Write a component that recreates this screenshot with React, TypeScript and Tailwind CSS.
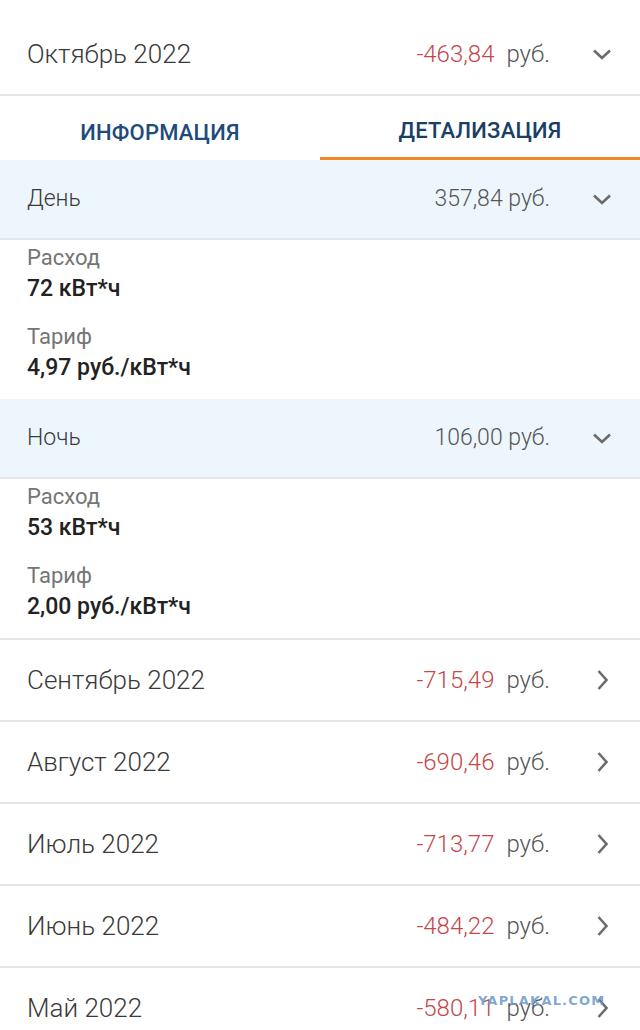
import React from "react";

type Month = { name: string; amount: string; open?: boolean };

const months: Month[] = [
  { name: "Сентябрь 2022", amount: "-715,49" },
  { name: "Август 2022", amount: "-690,46" },
  { name: "Июль 2022", amount: "-713,77" },
  { name: "Июнь 2022", amount: "-484,22" },
  { name: "Май 2022", amount: "-580,11" },
];

function ChevronDown() {
  return (
    <svg width="20" height="12" viewBox="0 0 20 12" className="text-[#6b6b6b]">
      <path d="M2 2.5l8 7.5 8-7.5" fill="none" stroke="currentColor" strokeWidth="2.6" />
    </svg>
  );
}

function ChevronRight() {
  return (
    <svg width="12" height="22" viewBox="0 0 12 22" className="text-[#6b6b6b]">
      <path d="M2.5 2l8 9-8 9" fill="none" stroke="currentColor" strokeWidth="2.6" />
    </svg>
  );
}

function MonthRow({ name, amount, open }: Month) {
  return (
    <div className="flex h-[80px] items-center pl-[27px] pr-[27px]">
      <span className="flex-1 text-[26px] font-light text-[#3a3a3a]">{name}</span>
      <span className="text-[24px] font-light text-[#c4484a]">{amount}</span>
      <span className="ml-[12px] text-[24px] font-light text-[#555]">руб.</span>
      <span className="ml-[41px] flex w-[22px] justify-center">
        {open ? <ChevronDown /> : <ChevronRight />}
      </span>
    </div>
  );
}

function ZoneHeader({ name, amount }: { name: string; amount: string }) {
  return (
    <div className="flex h-[80px] items-center border-b-2 border-[#e3e6ea] bg-[#eef6fd] pl-[27px] pr-[27px]">
      <span className="flex-1 text-[23px] font-light text-[#3a3a3a]">{name}</span>
      <span className="text-[23px] font-light text-[#555]">{amount} руб.</span>
      <span className="ml-[41px] flex w-[22px] justify-center">
        <ChevronDown />
      </span>
    </div>
  );
}

function Details({ usage, tariff }: { usage: string; tariff: string }) {
  return (
    <div className="flex flex-col pl-[27px] pt-[2px] pb-[16px] leading-[31px]">
      <span className="text-[22px] text-[#757575]">Расход</span>
      <span className="text-[23px] font-medium text-[#222]">{usage}</span>
      <span className="mt-[17px] text-[22px] text-[#757575]">Тариф</span>
      <span className="text-[23px] font-medium text-[#222]">{tariff}</span>
    </div>
  );
}

export default function App() {
  return (
    <div className="relative h-[1030px] w-[640px] overflow-hidden bg-white font-['Roboto',sans-serif]">
      <div className="border-b-2 border-[#e6e6e6] pt-[14px]">
        <MonthRow name="Октябрь 2022" amount="-463,84" open />
      </div>

      <div className="flex h-[64px]">
        <div className="flex flex-1 items-center justify-center pt-[8px] text-[22px] font-medium tracking-[0.2px] text-[#1f4b7c]">
          ИНФОРМАЦИЯ
        </div>
        <div className="flex flex-1 items-center justify-center border-b-[3px] border-[#f08a24] pt-[8px] text-[22px] font-medium tracking-[0.2px] text-[#1a3f66]">
          ДЕТАЛИЗАЦИЯ
        </div>
      </div>

      <ZoneHeader name="День" amount="357,84" />
      <Details usage="72 кВт*ч" tariff="4,97 руб./кВт*ч" />
      <ZoneHeader name="Ночь" amount="106,00" />
      <Details usage="53 кВт*ч" tariff="2,00 руб./кВт*ч" />

      {months.map((m) => (
        <div key={m.name} className="border-t-2 border-[#e6e6e6]">
          <MonthRow {...m} />
        </div>
      ))}

      <span className="absolute left-[478px] top-[994px] font-['DejaVu_Sans',sans-serif] text-[13px] font-bold leading-[13px] tracking-[1.2px] text-[#6a98c6]/85">
        YAPLAKAL.COM
      </span>
    </div>
  );
}
